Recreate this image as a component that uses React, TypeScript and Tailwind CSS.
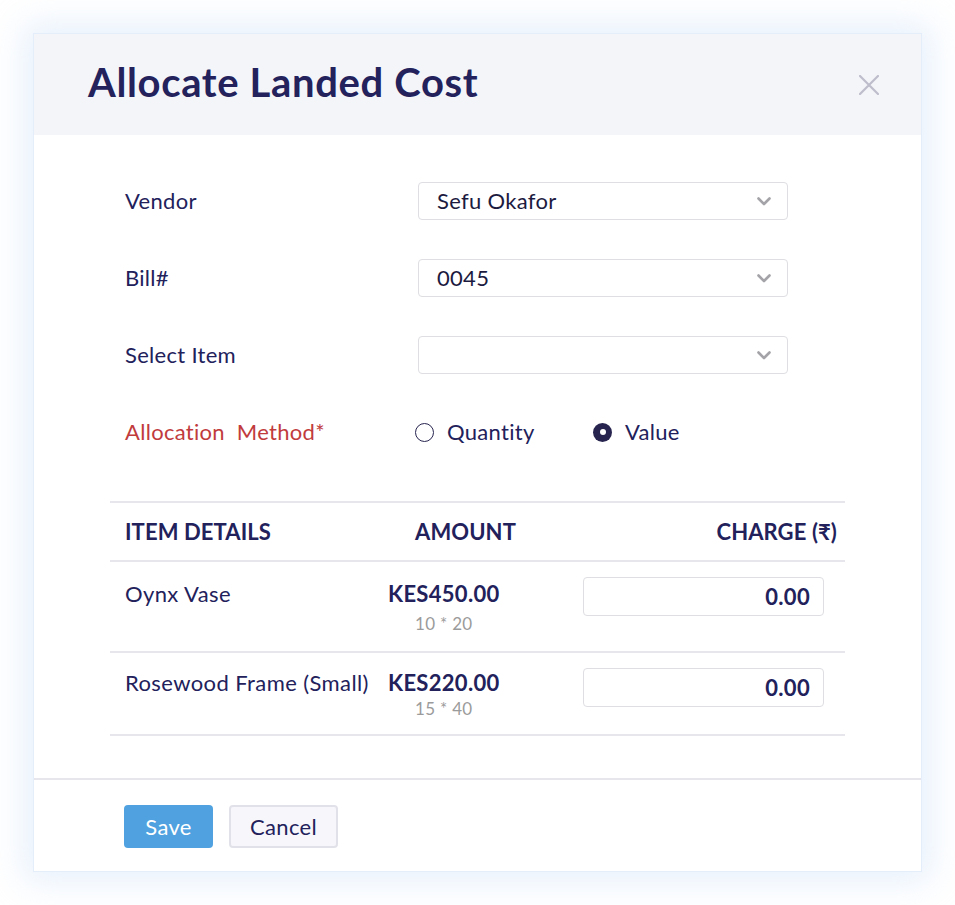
import React from "react";

const font = { fontFamily: "Lato, 'Open Sans', sans-serif" };

function Chevron() {
  return (
    <svg width="14" height="9" viewBox="0 0 14 9" className="shrink-0">
      <path d="M1.5 1.5 L7 7 L12.5 1.5" fill="none" stroke="#a3a3a8" strokeWidth="2.6" strokeLinecap="round" strokeLinejoin="round" />
    </svg>
  );
}

function Select({ value }: { value?: string }) {
  return (
    <div className="w-[370px] h-[38px] rounded-[4px] border border-[#dedee3] bg-white flex items-center justify-between pl-[18px] pr-[16px]">
      <span className="text-[22px] leading-[24px] tracking-[0.3px] text-[#1c1b3f]">{value ?? ""}</span>
      <Chevron />
    </div>
  );
}

function FormRow({ label, children, red }: { label: string; children: React.ReactNode; red?: boolean }) {
  return (
    <div className="flex items-center h-[38px]">
      <div className={`w-[293px] text-[22px] leading-[24px] tracking-[0.3px] whitespace-pre ${red ? "text-[#c13b3d]" : "text-[#22215b]"}`}>{label}</div>
      {children}
    </div>
  );
}

function Radio({ checked, label, w }: { checked?: boolean; label: string; w?: string }) {
  return (
    <div className={`flex items-center gap-[13px] ${w ?? ""}`}>
      {checked ? (
        <span className="w-[19px] h-[19px] rounded-full bg-[#27254f] flex items-center justify-center shrink-0">
          <span className="w-[6px] h-[6px] rounded-full bg-white" />
        </span>
      ) : (
        <span className="w-[19px] h-[19px] rounded-full border-[1.5px] border-[#27254f] bg-white shrink-0" />
      )}
      <span className="text-[22px] leading-[24px] tracking-[0.3px] text-[#22215b]">{label}</span>
    </div>
  );
}

function ItemRow({ name, amount, sub, h, pt, subGap }: { name: string; amount: string; sub: string; h: string; pt: string; subGap: string }) {
  return (
    <div className={`flex items-start border-b-2 border-[#e6e6ec] ${h}`}>
      <div className={`w-[278px] pl-[15px] ${pt} text-[22px] leading-[24px] tracking-[0.4px] text-[#22215b] whitespace-nowrap`}>{name}</div>
      <div className={`w-[170px] ${pt}`}>
        <div className="inline-flex flex-col items-center">
          <div className="text-[22px] font-bold tracking-[0.3px] text-[#22215b] leading-[24px]">{amount}</div>
          <div className={`${subGap} text-[17px] text-[#9b9b9b] leading-[20px] tracking-[0.3px]`}>{sub}</div>
        </div>
      </div>
      <div className="flex-1 flex justify-end pr-[21px] pt-[15px]">
        <div className="w-[241px] h-[39px] rounded-[4px] border border-[#dedee3] bg-white flex items-center justify-end pr-[13px]">
          <span className="text-[22px] font-bold text-[#22215b] tracking-[0.3px]">0.00</span>
        </div>
      </div>
    </div>
  );
}

export default function App() {
  return (
    <div className="w-[955px] h-[905px] bg-white pt-[33px] pl-[33px]" style={font}>
      <div className="w-[889px] h-[839px] bg-white border border-[#e4eefb] shadow-[0_0_32px_10px_rgba(214,230,250,0.55)] flex flex-col">
        <div className="h-[101px] bg-[#f4f5f9] flex items-center justify-between pl-[54px] pr-[42px] shrink-0">
          <h1 className="text-[40px] font-bold text-[#23225c] tracking-[0.65px] leading-none mb-[6px]">Allocate Landed Cost</h1>
          <svg width="20" height="20" viewBox="0 0 20 20">
            <path d="M1 1 L19 19 M19 1 L1 19" stroke="#bdbdcc" strokeWidth="2.2" strokeLinecap="round" />
          </svg>
        </div>

        <div className="flex-1 flex flex-col">
          <div className="pl-[91px] pt-[47px] flex flex-col gap-[39px]">
            <FormRow label="Vendor"><Select value="Sefu Okafor" /></FormRow>
            <FormRow label="Bill#"><Select value="0045" /></FormRow>
            <FormRow label="Select Item"><Select /></FormRow>
            <FormRow label="Allocation  Method*" red>
              <div className="flex items-center -ml-[3px]">
                <Radio label="Quantity" w="w-[178px]" />
                <Radio checked label="Value" />
              </div>
            </FormRow>
          </div>

          <div className="ml-[76px] mt-[50px] w-[735px] border-t-2 border-[#e6e6ec]">
            <div className="h-[59px] flex items-center border-b-2 border-[#e6e6ec] text-[22px] font-bold tracking-[0.1px] text-[#22215b]">
              <div className="w-[305px] pl-[15px]">ITEM DETAILS</div>
              <div className="w-[200px]">AMOUNT</div>
              <div className="flex-1 text-right pr-[8px]">CHARGE (₹)</div>
            </div>
            <ItemRow name="Oynx Vase" amount="KES450.00" sub="10 * 20" h="h-[91px]" pt="pt-[20px]" subGap="mt-[8px]" />
            <ItemRow name="Rosewood Frame (Small)" amount="KES220.00" sub="15 * 40" h="h-[83px]" pt="pt-[18px]" subGap="mt-[4px]" />
          </div>
        </div>

        <div className="h-[93px] border-t-2 border-[#e6e6ec] pl-[90px] pt-[25px] flex gap-[16px] shrink-0">
          <button className="w-[89px] h-[43px] rounded-[4px] bg-[#4fa2df] text-white text-[22px] tracking-[0.3px]">Save</button>
          <button className="w-[109px] h-[43px] rounded-[4px] bg-[#f7f7fb] border-2 border-[#e1e1e9] text-[#22215b] text-[22px] tracking-[0.3px]">Cancel</button>
        </div>
      </div>
    </div>
  );
}
